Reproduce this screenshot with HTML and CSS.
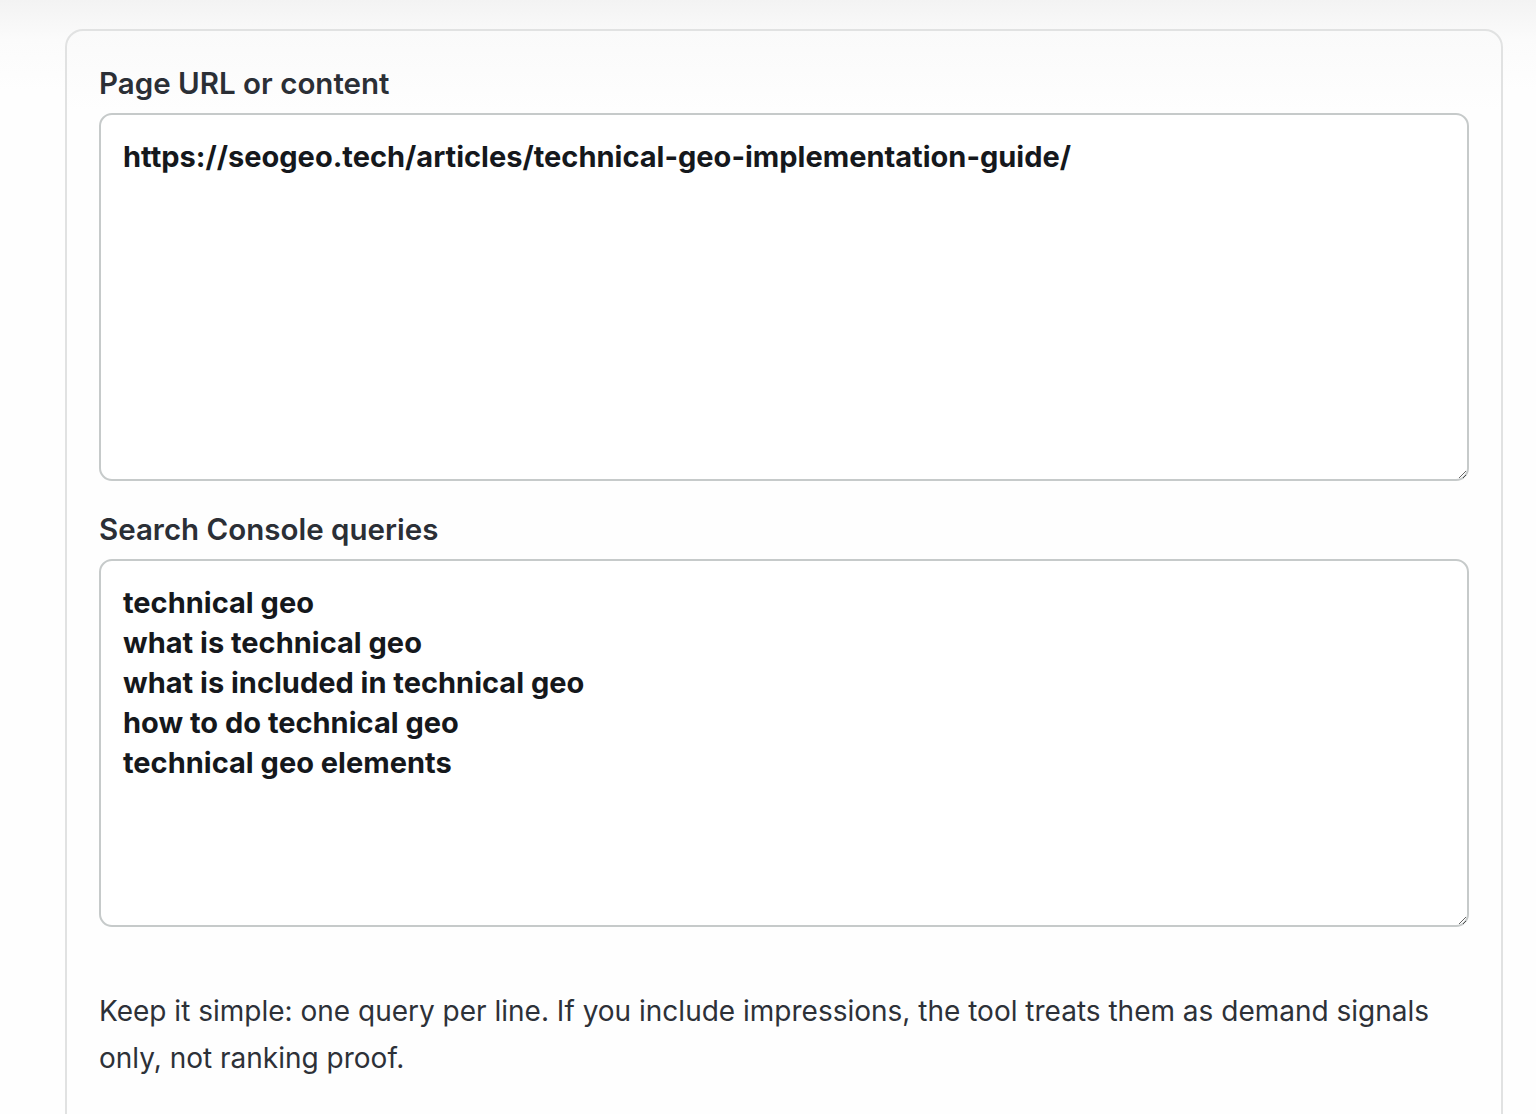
FILE: index.html
```html
<!DOCTYPE html>
<html lang="en">
<head>
<meta charset="utf-8">
<title>Query input</title>
<link rel="stylesheet" href="styles.css">
</head>
<body>
<main class="page">
  <section class="card">
    <div class="field">
      <label class="label" for="page">Page URL or content</label>
      <textarea id="page" class="input">https://seogeo.tech/articles/technical-geo-implementation-guide/</textarea>
    </div>
    <div class="field">
      <label class="label" for="queries">Search Console queries</label>
      <textarea id="queries" class="input">technical geo
what is technical geo
what is included in technical geo
how to do technical geo
technical geo elements</textarea>
    </div>
    <p class="hint">Keep it simple: one query per line. If you include impressions, the tool treats them as demand signals only, not ranking proof.</p>
  </section>
</main>
</body>
</html>
```

FILE: styles.css
```css
html, body {
  margin: 0;
  padding: 0;
}
body {
  background: linear-gradient(to bottom, #f3f3f3 0px, #fbfbfb 40px, #fefefe 90px, #fefefe 100%);
  font-family: Inter, "Noto Sans", sans-serif;
  color: #2a2e35;
  height: 1114px;
  overflow: hidden;
}
.page {
  padding: 29px 33px 0 65px;
}
.card {
  border: 2px solid #e1e2e2;
  border-radius: 18px;
  background: linear-gradient(to bottom, #fafafa 0px, #fefefe 80px);
  padding: 34px 32px 40px 32px;
  min-height: 1200px;
}
.field {
  display: flex;
  flex-direction: column;
  gap: 12px;
  margin-bottom: 30px;
}
.label {
  font-size: 29.5px;
  font-weight: 600;
  line-height: 36px;
  color: #2b2f36;
}
.input {
  display: block;
  box-sizing: border-box;
  width: 100%;
  height: 368px;
  border: 2px solid #c6caca;
  border-radius: 13px;
  background: #ffffff;
  padding: 22px 22px;
  font-family: Inter, "Noto Sans", sans-serif;
  font-size: 29px;
  font-weight: 700;
  line-height: 40px;
  color: #15181c;
  resize: vertical;
  outline: none;
}
.hint {
  margin: 61px 0 0 0;
  font-size: 28px;
  line-height: 47px;
  color: #2d3138;
}
```
